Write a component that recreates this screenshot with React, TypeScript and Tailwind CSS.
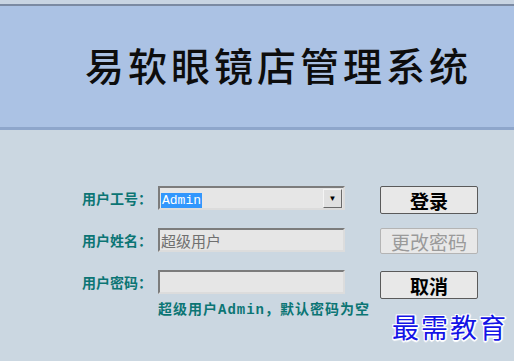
import React from "react";

const cjk = { fontFamily: '"Noto Sans CJK SC", sans-serif' };
const mono = { fontFamily: '"Liberation Mono", "Noto Sans CJK SC", monospace' };

function Label({ text }: { text: string }) {
  return (
    <div className="w-[76px] text-[14px] font-bold text-[#0b7574] leading-none" style={cjk}>
      {text}
    </div>
  );
}

function Field({ children }: { children?: React.ReactNode }) {
  return (
    <div className="flex h-[24px] w-[187px] items-center border-2 border-t-[#7c7c7c] border-l-[#7c7c7c] border-b-[#dcdcdc] border-r-[#dcdcdc] bg-[#e6e6e6]">
      {children}
    </div>
  );
}

function Btn({ text, disabled }: { text: string; disabled?: boolean }) {
  return (
    <div
      className={`flex w-[98px] items-center justify-center rounded-[2px] border bg-[#e8e8e8] text-[19px] leading-none ${
        disabled ? "h-[26px] border-[#b4b4b4] text-[#9a9a9a]" : "h-[28px] border-[#5a5a5a] font-bold text-black"
      }`}
      style={cjk}
    >
      {text}
    </div>
  );
}

export default function App() {
  return (
    <div className="relative h-[361px] w-[514px] overflow-hidden bg-[#cbd7e1]">
      <div className="h-[4px] bg-[#c8d4e2]" />
      <div className="h-[2px] bg-[#7b8aa2]" />
      <div className="flex h-[124px] items-center border-b-[3px] border-[#8ea6cb] bg-[#abc2e4] pl-[85px] pb-[4px]">
        <h1 className="text-[39px] font-medium tracking-[4px] text-[#0d0d0d]" style={cjk}>
          易软眼镜店管理系统
        </h1>
      </div>

      <div className="flex pl-[82px] pt-[56px]">
        <div className="flex w-[263px] shrink-0 flex-col">
          <div className="flex items-center">
            <Label text="用户工号：" />
            <Field>
              <span className="ml-[1px] flex-1">
                <span className="bg-[#3297fd] px-[1px] text-[13px] text-white" style={mono}>Admin</span>
              </span>
              <div className="mr-[1px] flex h-[19px] w-[19px] items-center justify-center border border-t-[#f4f4f4] border-l-[#f4f4f4] border-b-[#6a6a6a] border-r-[#6a6a6a] bg-[#e0e0e0] text-[8px] text-black">
                ▼
              </div>
            </Field>
          </div>
          <div className="mt-[18px] flex items-center">
            <Label text="用户姓名：" />
            <Field>
              <span className="ml-[1px] text-[15px] leading-none text-[#707070]" style={cjk}>超级用户</span>
            </Field>
          </div>
          <div className="mt-[18px] flex items-center">
            <Label text="用户密码：" />
            <Field />
          </div>
          <div className="ml-[76px] mt-[7px] whitespace-nowrap text-[14px] font-bold leading-none tracking-[1px] text-[#0b7574]" style={cjk}>
            超级用户<span style={mono}>Admin</span>，默认密码为空
          </div>
        </div>

        <div className="ml-[35px] flex flex-col">
          <Btn text="登录" />
          <div className="mt-[14px]">
            <Btn text="更改密码" disabled />
          </div>
          <div className="mt-[17px]">
            <Btn text="取消" />
          </div>
        </div>
      </div>

      <div
        className="absolute left-[392px] top-[307px] text-[27px] tracking-[2px] text-[#1414e6]"
        style={{ ...cjk, textShadow: "1px 1px 0 #fff, -1px -1px 0 #fff, 1px -1px 0 #fff, -1px 1px 0 #fff, 0 2px 1px #fff, 2px 0 1px #fff" }}
      >
        最需教育
      </div>
    </div>
  );
}
